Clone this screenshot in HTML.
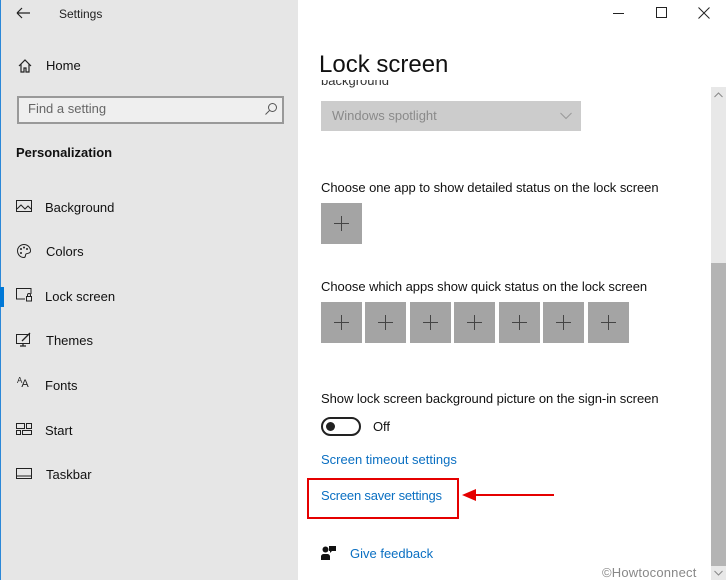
<!DOCTYPE html>
<html><head><meta charset="utf-8"><style>
*{margin:0;padding:0;box-sizing:border-box}
body{width:726px;height:580px;overflow:hidden;font-family:"Liberation Sans",sans-serif;background:#fff;position:relative;color:#000}
.side{position:absolute;left:0;top:0;width:298px;height:580px;background:#e6e6e6;border-left:1px solid #2b88d8}
.a{position:absolute;white-space:nowrap}
.s{font-size:13px;color:#111;letter-spacing:-0.05px}
.nav{font-size:13px;color:#111}
.ic{position:absolute}
.plus{position:absolute;width:41px;height:41px;background:#a4a4a4}
.plus:before{content:"";position:absolute;left:13px;top:20px;width:15px;height:1px;background:#444}
.plus:after{content:"";position:absolute;left:20px;top:13px;width:1px;height:15px;background:#444}
.link{color:#0a6fc2;font-size:13px}
</style></head><body>
<div class="side">
 <svg class="ic" style="left:14px;top:6px" width="16" height="14"><path d="M2 7H15M2 7L7 2M2 7L7 12" stroke="#222" fill="none" stroke-width="1.2"/></svg>
 <div class="a" style="left:58px;top:7px;font-size:12px;color:#222">Settings</div>
 <svg class="ic" style="left:16px;top:58px" width="16" height="16"><path d="M2 8L8 2L14 8M4 6V14H7V10H9V14H12V6" stroke="#222" fill="none" stroke-width="1.2"/></svg>
 <div class="a nav" style="left:45px;top:58px;font-size:13px">Home</div>
 <div class="a" style="left:16px;top:96px;width:267px;height:28px;border:2px solid #999;background:#efefef"></div>
 <div class="a" style="left:27px;top:101px;font-size:13px;color:#666">Find a setting</div>
 <svg class="ic" style="left:263px;top:102px" width="14" height="14"><circle cx="8.5" cy="5.5" r="4" stroke="#555" fill="none"/><path d="M5.5 8.5L1.5 12.5" stroke="#555"/></svg>
 <div class="a" style="left:15px;top:145px;font-size:13px;font-weight:bold;color:#111">Personalization</div>
 <svg class="ic" style="left:15px;top:200px" width="16" height="13"><rect x="0.5" y="0.5" width="15" height="11" fill="none" stroke="#222"/><path d="M1 9L5 5L9 9L12 6L15 9" stroke="#222" fill="none"/></svg>
 <div class="a nav" style="left:44px;top:200px">Background</div>
 <svg class="ic" style="left:15px;top:243px" width="16" height="16"><path d="M8 1.5A6.5 6.5 0 1 0 8 14.5C10 14.5 9 12 10 11C11 10 14.5 11 14.5 8A6.5 6.5 0 0 0 8 1.5Z" fill="none" stroke="#222"/><circle cx="5" cy="6" r="1" fill="#222"/><circle cx="8" cy="4.5" r="1" fill="#222"/><circle cx="11" cy="6" r="1" fill="#222"/><circle cx="5" cy="10" r="1" fill="#222"/></svg>
 <div class="a nav" style="left:45px;top:244px">Colors</div>
 <div class="a" style="left:-1px;top:287px;width:4px;height:20px;background:#0078d7"></div>
 <svg class="ic" style="left:15px;top:288px" width="16" height="14"><path d="M9 11H0.5V0.5H15V6" fill="none" stroke="#222"/><rect x="10.5" y="8.5" width="5" height="4.5" fill="none" stroke="#222"/><path d="M11.5 8.5V7A1.5 1.5 0 0 1 14.5 7V8.5" fill="none" stroke="#222"/></svg>
 <div class="a nav" style="left:44px;top:289px">Lock screen</div>
 <svg class="ic" style="left:15px;top:332px" width="16" height="15"><rect x="0.5" y="2.5" width="13" height="9" fill="none" stroke="#222"/><path d="M4 14H10M7 11.5V14M6 9L14 1" stroke="#222" fill="none" stroke-width="1.3"/></svg>
 <div class="a nav" style="left:45px;top:333px">Themes</div>
 <div class="a" style="left:16px;top:376px;font-size:11px;color:#222;letter-spacing:-1px"><span style="font-size:8px;vertical-align:4px">A</span>A</div>
 <div class="a nav" style="left:44px;top:378px">Fonts</div>
 <svg class="ic" style="left:15px;top:423px" width="16" height="13"><rect x="0.5" y="0.5" width="8" height="5" fill="none" stroke="#222"/><rect x="10.5" y="0.5" width="5" height="5" fill="none" stroke="#222"/><rect x="0.5" y="7.5" width="4" height="4" fill="none" stroke="#222"/><rect x="6.5" y="7.5" width="9" height="4" fill="none" stroke="#222"/></svg>
 <div class="a nav" style="left:44px;top:423px">Start</div>
 <svg class="ic" style="left:15px;top:468px" width="16" height="12"><rect x="0.5" y="0.5" width="15" height="10" fill="none" stroke="#222"/><path d="M1 8H15" stroke="#222"/></svg>
 <div class="a nav" style="left:45px;top:467px">Taskbar</div>
</div>
<div class="a" style="left:613px;top:13px;width:11px;height:1px;background:#222"></div>
<div class="a" style="left:656px;top:7px;width:11px;height:11px;border:1px solid #222"></div>
<svg class="ic" style="left:698px;top:7px" width="12" height="12"><path d="M0.5 0.5L11.5 11.5M11.5 0.5L0.5 11.5" stroke="#222"/></svg>
<div class="a" style="left:319px;top:51px;font-size:24px;color:#111">Lock screen</div>
<div class="a" style="left:321px;top:80px;height:10px;overflow:hidden;width:200px"><div style="font-size:13px;color:#333;margin-top:-7px">background</div></div>
<div class="a" style="left:321px;top:101px;width:260px;height:30px;background:#cccccc"></div>
<div class="a" style="left:332px;top:108px;font-size:13px;color:#8a8a8a">Windows spotlight</div>
<svg class="ic" style="left:560px;top:112px" width="12" height="8"><path d="M0.5 1L6 6.5L11.5 1" stroke="#999" fill="none"/></svg>
<div class="a s" style="left:321px;top:180px">Choose one app to show detailed status on the lock screen</div>
<div class="plus" style="left:321px;top:203px"></div>
<div class="a s" style="left:321px;top:279px">Choose which apps show quick status on the lock screen</div>
<div class="plus" style="left:321px;top:302px"></div>
<div class="plus" style="left:365px;top:302px"></div>
<div class="plus" style="left:410px;top:302px"></div>
<div class="plus" style="left:454px;top:302px"></div>
<div class="plus" style="left:499px;top:302px"></div>
<div class="plus" style="left:543px;top:302px"></div>
<div class="plus" style="left:588px;top:302px"></div>
<div class="a s" style="left:321px;top:391px">Show lock screen background picture on the sign-in screen</div>
<div class="a" style="left:321px;top:417px;width:40px;height:19px;border:2px solid #222;border-radius:10px"></div>
<div class="a" style="left:326px;top:422px;width:9px;height:9px;border-radius:50%;background:#222"></div>
<div class="a s" style="left:373px;top:419px">Off</div>
<div class="a link" style="left:321px;top:452px">Screen timeout settings</div>
<div class="a" style="left:307px;top:478px;width:152px;height:41px;border:2px solid #e50000"></div>
<div class="a link" style="left:321px;top:488px;letter-spacing:-0.2px">Screen saver settings</div>
<div class="a" style="left:472px;top:494px;width:82px;height:2px;background:#e50000"></div>
<svg class="ic" style="left:462px;top:489px" width="14" height="12"><path d="M0 6L14 0V12Z" fill="#e50000"/></svg>
<svg class="ic" style="left:321px;top:545px" width="16" height="16"><circle cx="4.5" cy="4.5" r="3" fill="#111"/><path d="M0 15V11A3 3 0 0 1 3 9H6A3 3 0 0 1 9 11V15Z" fill="#111"/><path d="M8 1H15V6H11L9 8V6H8Z" fill="#111"/></svg>
<div class="a link" style="left:350px;top:546px">Give feedback</div>
<div class="a" style="left:602px;top:565px;font-size:13px;color:#888;letter-spacing:0.2px">©Howtoconnect</div>
<div class="a" style="left:711px;top:87px;width:15px;height:493px;background:#e8e8e8"></div>
<div class="a" style="left:711px;top:263px;width:15px;height:303px;background:#b4b4b4"></div>
<svg class="ic" style="left:714px;top:92px" width="9" height="6"><path d="M0.5 5L4.5 1L8.5 5" stroke="#888" fill="none"/></svg>
<svg class="ic" style="left:714px;top:570px" width="9" height="6"><path d="M0.5 1L4.5 5L8.5 1" stroke="#888" fill="none"/></svg>
</body></html>
